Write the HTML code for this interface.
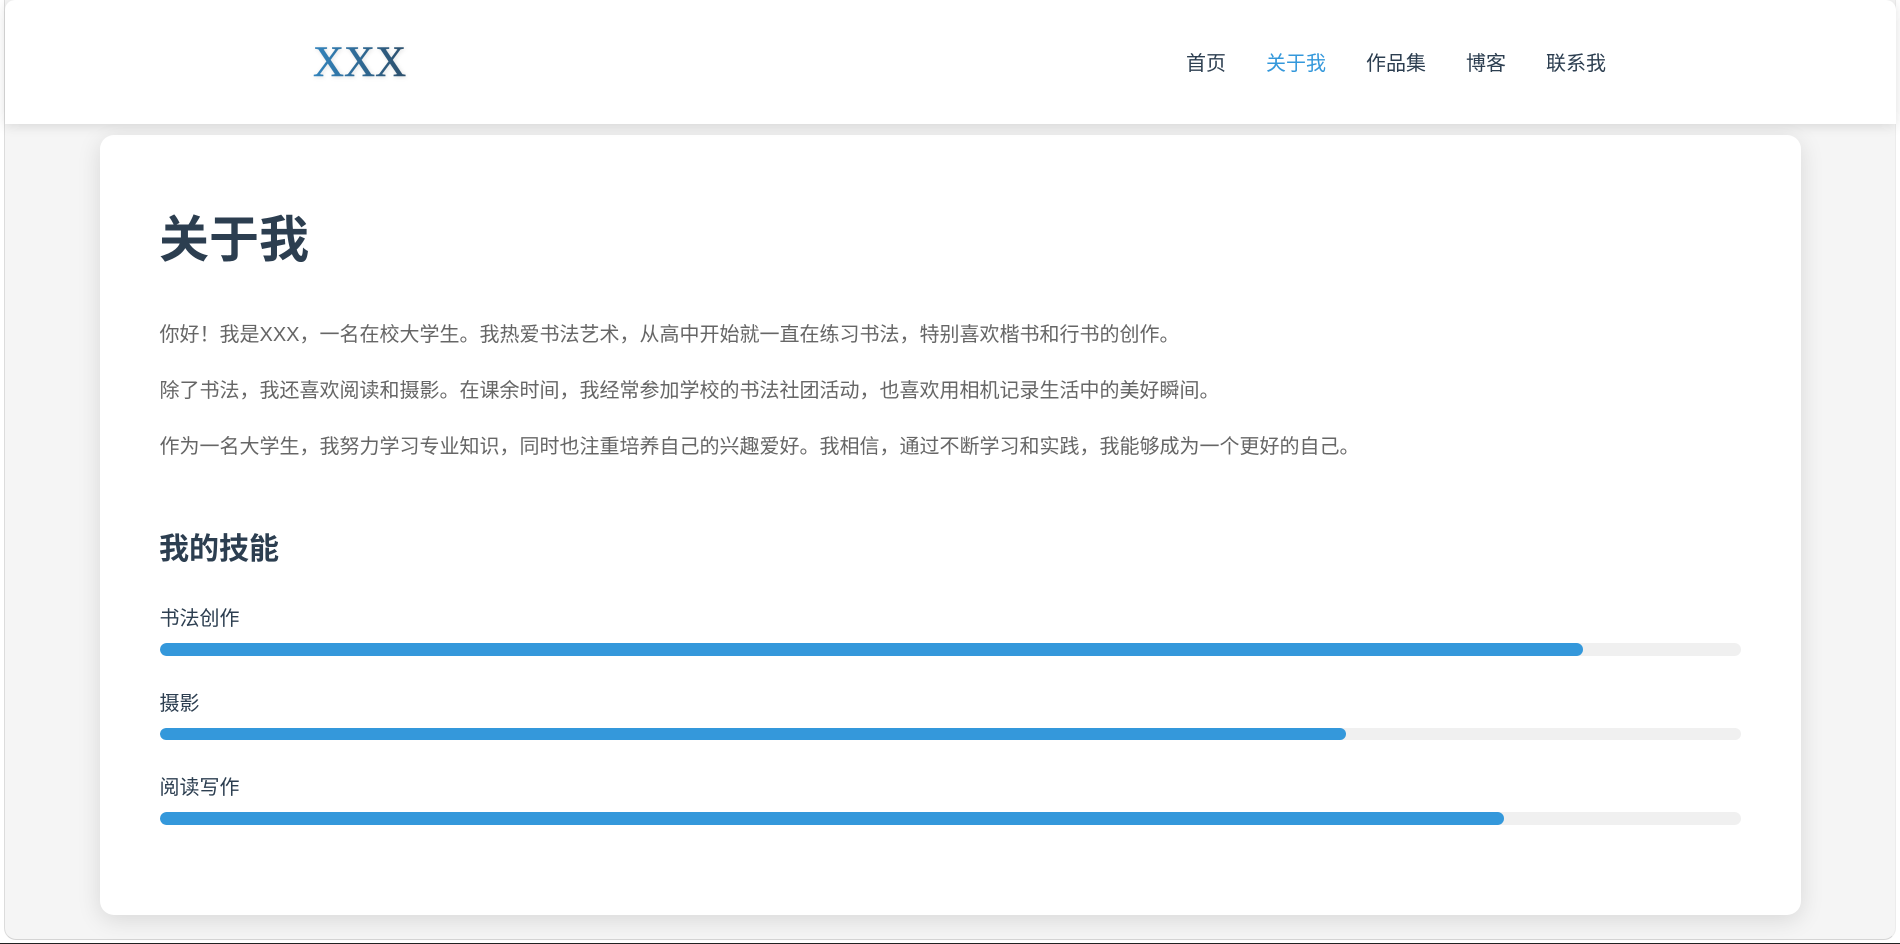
<!DOCTYPE html>
<html lang="zh">
<head>
<meta charset="utf-8">
<title>关于我</title>
<style>
html,body{margin:0;padding:0;width:1900px;height:944px;overflow:hidden;background:#fff;}
body{position:relative;font-family:"Liberation Sans","Noto Sans CJK SC",sans-serif;}
.frame{position:absolute;left:4px;top:0;width:1892px;height:940px;background:#f5f5f5;border-left:1px solid #dcdcdc;border-bottom:1px solid #d4d4d4;border-right:1px solid #ececec;box-sizing:border-box;border-radius:0 0 12px 12px;overflow:hidden;}
.blackline{position:absolute;left:0;top:943px;width:1900px;height:1px;background:#222;}
header{position:absolute;left:5px;top:0;width:1891px;height:124px;background:#fff;box-shadow:0 2px 12px rgba(0,0,0,.12);border-radius:10px 10px 0 0;}
.logo{position:absolute;left:308px;top:39px;line-height:48px;font-family:"Liberation Serif","Noto Serif CJK SC",serif;font-size:43px;white-space:nowrap;color:transparent;background:linear-gradient(90deg,#3284bd,#2c4f6c);-webkit-background-clip:text;background-clip:text;-webkit-text-stroke:0.4px transparent;filter:drop-shadow(1.5px 1.5px 2px rgba(0,0,0,.12));}
nav a{position:absolute;top:49px;font-size:20px;line-height:30px;color:#2c3e50;text-decoration:none;white-space:nowrap;}
nav a.on{color:#3498db;}
.card{position:absolute;left:100px;top:135px;width:1701px;height:780px;background:#fff;border-radius:14px;box-shadow:0 5px 24px rgba(0,0,0,.12);}
h1,h2,p,.lab,.bar{position:absolute;margin:0;left:60px;white-space:nowrap;}
h1{left:59px;top:69px;font-size:50px;line-height:72px;color:#2c3e50;font-weight:700;}
h2{left:59px;top:393px;font-size:30px;line-height:44px;color:#2c3e50;font-weight:700;}
p{left:59.5px;font-size:20px;line-height:30px;color:#666;}
.lab{left:59.5px;font-size:20px;line-height:30px;color:#2c3e50;}
.bar{width:1581px;background:#f0f0f0;border-radius:7px;overflow:hidden;}
.bar i{display:block;height:100%;background:#3498db;border-radius:7px;}
</style>
</head>
<body>
<div class="frame"></div>
<div class="card">
  <h1>关于我</h1>
  <p style="top:185px">你好&#xFF01;我是XXX&#xFF0C;一名在校大学生。我热爱书法艺术&#xFF0C;从高中开始就一直在练习书法&#xFF0C;特别喜欢楷书和行书的创作。</p>
  <p style="top:241px">除了书法&#xFF0C;我还喜欢阅读和摄影。在课余时间&#xFF0C;我经常参加学校的书法社团活动&#xFF0C;也喜欢用相机记录生活中的美好瞬间。</p>
  <p style="top:297px">作为一名大学生&#xFF0C;我努力学习专业知识&#xFF0C;同时也注重培养自己的兴趣爱好。我相信&#xFF0C;通过不断学习和实践&#xFF0C;我能够成为一个更好的自己。</p>
  <h2>我的技能</h2>
  <div class="lab" style="top:469px">书法创作</div>
  <div class="bar" style="top:508px;height:13px"><i style="width:90%"></i></div>
  <div class="lab" style="top:554px">摄影</div>
  <div class="bar" style="top:593px;height:12px"><i style="width:75%"></i></div>
  <div class="lab" style="top:638px">阅读写作</div>
  <div class="bar" style="top:677px;height:13px"><i style="width:85%"></i></div>
</div>
<header>
  <div class="logo">XXX</div>
  <nav>
    <a style="left:1181px">首页</a>
    <a class="on" style="left:1261px">关于我</a>
    <a style="left:1361px">作品集</a>
    <a style="left:1461px">博客</a>
    <a style="left:1541px">联系我</a>
  </nav>
</header>
<div class="blackline"></div>
</body>
</html>
